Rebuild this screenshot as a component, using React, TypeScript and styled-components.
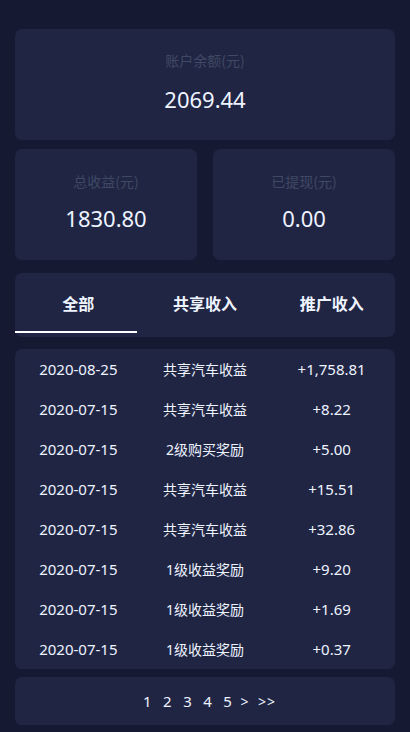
import React, { useState } from "react";
import styled, { createGlobalStyle } from "styled-components";

const GlobalStyle = createGlobalStyle`
  html, body {
    margin: 0;
    padding: 0;
    background: #151932;
  }
  body {
    font-family: "Noto Sans", "Noto Sans CJK SC", sans-serif;
    -webkit-font-smoothing: antialiased;
  }
`;

interface Record {
  date: string;
  title: string;
  amount: string;
}

const records: Record[] = [
  { date: "2020-08-25", title: "共享汽车收益", amount: "+1,758.81" },
  { date: "2020-07-15", title: "共享汽车收益", amount: "+8.22" },
  { date: "2020-07-15", title: "2级购买奖励", amount: "+5.00" },
  { date: "2020-07-15", title: "共享汽车收益", amount: "+15.51" },
  { date: "2020-07-15", title: "共享汽车收益", amount: "+32.86" },
  { date: "2020-07-15", title: "1级收益奖励", amount: "+9.20" },
  { date: "2020-07-15", title: "1级收益奖励", amount: "+1.69" },
  { date: "2020-07-15", title: "1级收益奖励", amount: "+0.37" },
];

const tabs = ["全部", "共享收入", "推广收入"];
const pages = ["1", "2", "3", "4", "5", ">", ">>"];

const Page = styled.div`
  display: flex;
  flex-direction: column;
  gap: 9px;
  padding: 29px 15px 8px;
  width: 410px;
  box-sizing: border-box;
`;

const Card = styled.div`
  background: #212544;
  border-radius: 7px;
`;

const StatCard = styled(Card)<{ $half?: boolean }>`
  flex: ${({ $half }) => ($half ? "1 1 0" : "none")};
  height: 111px;
  display: flex;
  flex-direction: column;
  align-items: center;
  justify-content: center;
  gap: ${({ $half }) => ($half ? "12px" : "14px")};
  padding-bottom: 5px;
  box-sizing: border-box;
`;

const StatRow = styled.div`
  display: flex;
  gap: 16px;
`;

const StatLabel = styled.span`
  color: #3f4963;
  font-size: 14px;
  line-height: 20px;
  font-family: "Noto Sans CJK SC", sans-serif;
`;

const StatValue = styled.span`
  color: #eef4ff;
  font-size: 22px;
  line-height: 30px;
`;

const TabBar = styled(Card)`
  display: flex;
  height: 64px;
  margin-top: 4px;
`;

const Tab = styled.div<{ $active?: boolean }>`
  flex: 1;
  position: relative;
  display: flex;
  align-items: center;
  justify-content: center;
  padding-bottom: 5px;
  color: #eef4ff;
  font-size: 16px;
  font-weight: 700;
  font-family: "Noto Sans CJK SC", sans-serif;
  cursor: pointer;

  &::after {
    content: "";
    display: ${({ $active }) => ($active ? "block" : "none")};
    position: absolute;
    left: 0;
    right: 5px;
    bottom: 4px;
    height: 2px;
    background: #ffffff;
  }
`;

const List = styled(Card)`
  display: flex;
  flex-direction: column;
  margin-top: 3px;
`;

const Row = styled.div`
  display: grid;
  grid-template-columns: repeat(3, 1fr);
  height: 40px;
  align-items: center;
  color: #eef4ff;
  font-size: 15px;
`;

const Cell = styled.span<{ $cjk?: boolean }>`
  text-align: center;
  font-size: ${({ $cjk }) => ($cjk ? "14px" : "15px")};
  font-family: "Noto Sans", "Noto Sans CJK SC", sans-serif;
`;

const Pager = styled(Card)`
  height: 48px;
  display: flex;
  align-items: center;
  justify-content: center;
  margin-top: -1px;
  padding-left: 9px;
  gap: 11.5px;
  color: #eef4ff;
  font-size: 15px;
`;

const PageLink = styled.span<{ $arrow?: boolean }>`
  cursor: pointer;
  margin-left: ${({ $arrow }) => ($arrow ? "-3px" : "0")};
  font-size: ${({ $arrow }) => ($arrow ? "14px" : "15px")};
  letter-spacing: ${({ $arrow }) => ($arrow ? "1px" : "0")};
`;

export default function App() {
  const [active, setActive] = useState(0);

  return (
    <>
      <GlobalStyle />
      <Page>
        <StatCard>
          <StatLabel>账户余额(元)</StatLabel>
          <StatValue>2069.44</StatValue>
        </StatCard>
        <StatRow>
          <StatCard $half>
            <StatLabel>总收益(元)</StatLabel>
            <StatValue>1830.80</StatValue>
          </StatCard>
          <StatCard $half>
            <StatLabel>已提现(元)</StatLabel>
            <StatValue>0.00</StatValue>
          </StatCard>
        </StatRow>
        <TabBar>
          {tabs.map((t, i) => (
            <Tab key={t} $active={i === active} onClick={() => setActive(i)}>
              {t}
            </Tab>
          ))}
        </TabBar>
        <List>
          {records.map((r, i) => (
            <Row key={i}>
              <Cell>{r.date}</Cell>
              <Cell $cjk>{r.title}</Cell>
              <Cell>{r.amount}</Cell>
            </Row>
          ))}
        </List>
        <Pager>
          {pages.map((p) => (
            <PageLink key={p} $arrow={p.startsWith(">")}>
              {p}
            </PageLink>
          ))}
        </Pager>
      </Page>
    </>
  );
}
